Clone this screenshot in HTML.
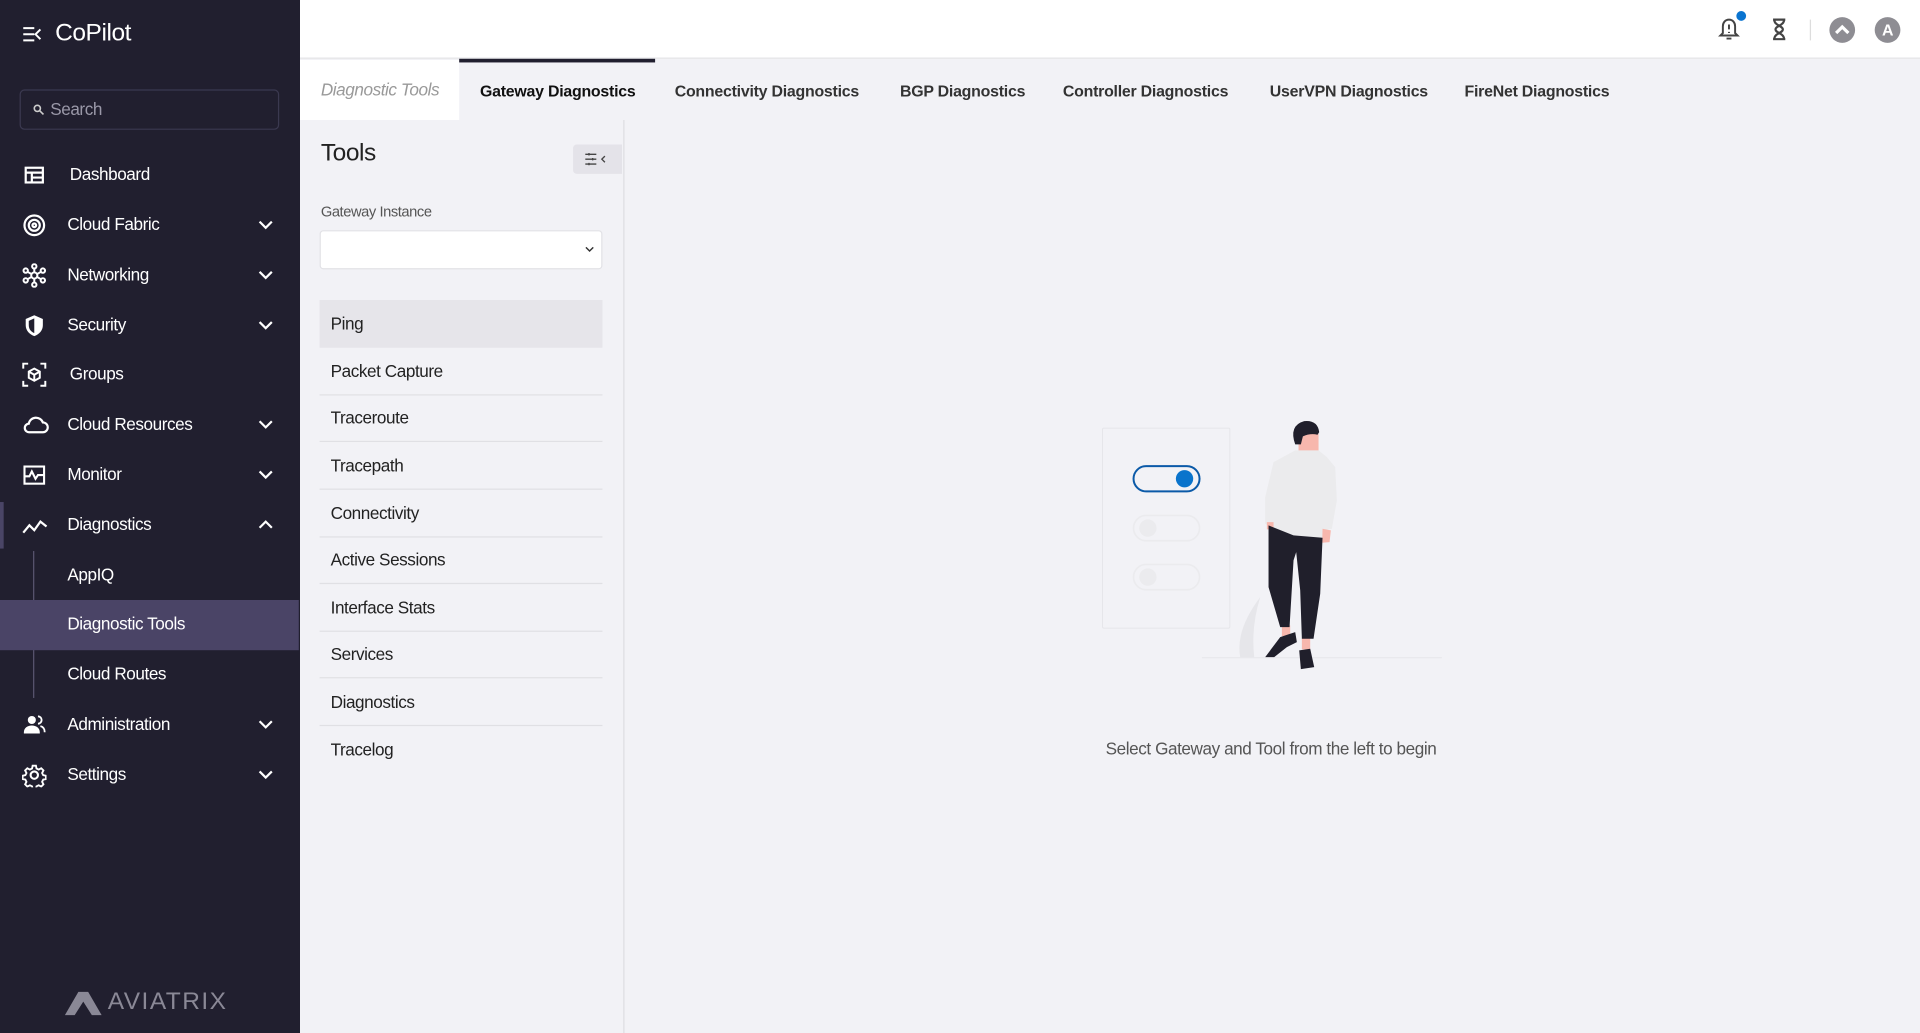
<!DOCTYPE html>
<html><head><meta charset="utf-8"><style>
*{box-sizing:border-box;margin:0;padding:0}
html,body{width:1920px;height:1033px;overflow:hidden;background:#f2f2f6;font-family:"Liberation Sans",sans-serif}
#w{position:absolute;left:0;top:0;width:1568px;height:844px;transform:scale(1.22449);transform-origin:0 0;background:#f2f2f6;letter-spacing:-0.35px}
.a{position:absolute}
#sb{left:0;top:0;width:245px;height:844px;background:#211f2f;color:#fff}
.ni{position:absolute;left:0;width:245px;height:40px;font-size:14px;color:#fff}
.ni span{position:absolute;left:55px;top:11px}
.ni svg.ic{position:absolute;left:18px;top:10px}
.ni svg.ch{position:absolute;left:211px;top:15px}
.tab{position:absolute;top:49px;height:49px;font-size:13px;font-weight:bold;color:#333;padding-top:18px;letter-spacing:-0.2px}
.li{position:absolute;left:261px;width:231px;height:38.6px;border-bottom:1px solid #e0e0e4;font-size:14px;color:#222;padding:11px 0 0 9px}
</style></head><body><div id="w">
<div id="sb" class="a">
 <svg class="a" style="left:18px;top:21px" width="17" height="14" viewBox="0 0 17 14" fill="none" stroke="#fff" stroke-width="1.6"><path d="M1 2h9M1 7h9M1 12h9M15 3l-4 4 4 4"/></svg>
 <div class="a" style="left:45px;top:16px;font-size:20px">CoPilot</div>
 <div class="a" style="left:16px;top:73px;width:212px;height:33px;border:1px solid #3b3950;border-radius:4px"></div>
 <svg class="a" style="left:27px;top:85px" width="9" height="9" viewBox="0 0 9 9" fill="none" stroke="#ccc" stroke-width="1.3"><circle cx="3.5" cy="3.5" r="2.5"/><path d="M5.5 5.5L8.5 8.5"/></svg>
 <div class="a" style="left:41px;top:81px;font-size:14px;color:#9a98a8">Search</div>

 <div class="ni" style="top:123px"><svg class="ic" width="20" height="20" viewBox="0 0 20 20" fill="none" stroke="#fff" stroke-width="1.8"><rect x="3" y="4" width="14" height="12"/><path d="M3 8h14M8 8v8M8 12h9"/></svg><span style="left:57px">Dashboard</span></div>
 <div class="ni" style="top:164px"><svg class="ic" width="20" height="20" viewBox="0 0 20 20" fill="none" stroke="#fff" stroke-width="1.8"><circle cx="10" cy="10" r="8"/><circle cx="10" cy="10" r="4.5"/><circle cx="10" cy="10" r="1.5"/></svg><span>Cloud Fabric</span><svg class="ch" width="12" height="10" viewBox="0 0 12 10" fill="none" stroke="#fff" stroke-width="1.8"><path d="M1 2l5 5 5-5"/></svg></div>
 <div class="ni" style="top:205px"><svg class="ic" width="20" height="20" viewBox="0 0 20 20" fill="none" stroke="#fff" stroke-width="1.6"><circle cx="10" cy="10" r="2.5"/><circle cx="10" cy="2.5" r="1.8"/><circle cx="10" cy="17.5" r="1.8"/><circle cx="3" cy="6" r="1.8"/><circle cx="17" cy="6" r="1.8"/><circle cx="3" cy="14" r="1.8"/><circle cx="17" cy="14" r="1.8"/><path d="M10 4v3.5M10 12.5V16M4.5 7l3.5 2M15.5 7l-3.5 2M4.5 13l3.5-2M15.5 13l-3.5-2"/></svg><span>Networking</span><svg class="ch" width="12" height="10" viewBox="0 0 12 10" fill="none" stroke="#fff" stroke-width="1.8"><path d="M1 2l5 5 5-5"/></svg></div>
 <div class="ni" style="top:246px"><svg class="ic" width="20" height="20" viewBox="0 0 20 20"><path d="M10 1.5l7 3v5c0 4.5-3 7.5-7 9-4-1.5-7-4.5-7-9v-5z" fill="#fff"/><path d="M10 4v12c-2.5-1-4.5-3-4.5-6.5V6z" fill="#211f2f"/></svg><span>Security</span><svg class="ch" width="12" height="10" viewBox="0 0 12 10" fill="none" stroke="#fff" stroke-width="1.8"><path d="M1 2l5 5 5-5"/></svg></div>
 <div class="ni" style="top:286px"><svg class="ic" width="20" height="20" viewBox="0 0 20 20" fill="none" stroke="#fff" stroke-width="1.6"><path d="M1 5V1h4M15 1h4v4M19 15v4h-4M5 19H1v-4"/><path d="M10 5l4.5 2.5v5L10 15l-4.5-2.5v-5z M5.5 7.5L10 10l4.5-2.5M10 10v5"/></svg><span style="left:57px">Groups</span></div>
 <div class="ni" style="top:327px"><svg class="ic" width="22" height="20" viewBox="0 0 22 20" fill="none" stroke="#fff" stroke-width="1.8"><path d="M6 16h11a4 4 0 0 0 0-8 6 6 0 0 0-11.5 1A3.5 3.5 0 0 0 6 16z"/></svg><span>Cloud Resources</span><svg class="ch" width="12" height="10" viewBox="0 0 12 10" fill="none" stroke="#fff" stroke-width="1.8"><path d="M1 2l5 5 5-5"/></svg></div>
 <div class="ni" style="top:368px"><svg class="ic" width="20" height="20" viewBox="0 0 20 20" fill="none" stroke="#fff" stroke-width="1.7"><rect x="2" y="3" width="16" height="14"/><path d="M2 11h4l2-4 3 6 2-3h5"/></svg><span>Monitor</span><svg class="ch" width="12" height="10" viewBox="0 0 12 10" fill="none" stroke="#fff" stroke-width="1.8"><path d="M1 2l5 5 5-5"/></svg></div>
 <div class="a" style="left:0;top:410px;width:3px;height:38px;background:#4a4566"></div>
 <div class="ni" style="top:409px"><svg class="ic" width="22" height="20" viewBox="0 0 22 20" fill="none" stroke="#fff" stroke-width="1.8"><path d="M1 16l5-6 4 4 5-7 5 4"/></svg><span>Diagnostics</span><svg class="ch" width="12" height="10" viewBox="0 0 12 10" fill="none" stroke="#fff" stroke-width="1.8"><path d="M1 7l5-5 5 5"/></svg></div>
 <div class="a" style="left:27px;top:450px;width:1px;height:120px;background:#5a5670"></div>
 <div class="ni" style="top:450px"><span>AppIQ</span></div>
 <div class="a" style="left:0;top:490px;width:244px;height:41px;background:#4a4466"></div>
 <div class="ni" style="top:490px"><span>Diagnostic Tools</span></div>
 <div class="ni" style="top:531px"><span>Cloud Routes</span></div>
 <div class="ni" style="top:572px"><svg class="ic" width="20" height="20" viewBox="0 0 20 20" fill="#fff"><circle cx="8" cy="6" r="3.3"/><path d="M1.5 16c0-3.5 3-5.5 6.5-5.5s6.5 2 6.5 5.5v1h-13z"/><path d="M13 3a3 3 0 0 1 0 6M15 11c2 .5 3.5 2 3.5 5" fill="none" stroke="#fff" stroke-width="1.5"/></svg><span>Administration</span><svg class="ch" width="12" height="10" viewBox="0 0 12 10" fill="none" stroke="#fff" stroke-width="1.8"><path d="M1 2l5 5 5-5"/></svg></div>
 <div class="ni" style="top:613px"><svg class="ic" width="20" height="20" viewBox="0 0 20 20" fill="none" stroke="#fff" stroke-width="1.7"><circle cx="10" cy="10" r="3"/><path d="M8.5 1.5h3l.5 2.5 2 1 2.3-1.2 2 2-1.2 2.3 1 2 2.5.5v3l-2.5.5-1 2 1.2 2.3-2 2-2.3-1.2-2 1-.5 2.5h-3l-.5-2.5-2-1-2.3 1.2-2-2 1.2-2.3-1-2-2.5-.5v-3l2.5-.5 1-2-1.2-2.3 2-2 2.3 1.2 2-1z" transform="translate(10 10) scale(.9) translate(-10 -10)"/></svg><span>Settings</span><svg class="ch" width="12" height="10" viewBox="0 0 12 10" fill="none" stroke="#fff" stroke-width="1.8"><path d="M1 2l5 5 5-5"/></svg></div>
 <svg class="a" style="left:53px;top:808px" width="30" height="22" viewBox="0 0 30 22"><path d="M0 21L11 2h8l11 19h-8l-7-11-7 11z" fill="#8a8896"/></svg>
 <div class="a" style="left:88px;top:807px;font-size:20px;color:#8a8896;letter-spacing:1.2px">AVIATRIX</div>
</div>

<div class="a" style="left:245px;top:0;width:1323px;height:48px;background:#fff;border-bottom:1px solid #e3e3e6"></div>
<svg class="a" style="left:1403px;top:14px" width="18" height="20" viewBox="0 0 18 20" fill="none" stroke="#444" stroke-width="1.6"><path d="M9 2c-3 0-5 2.5-5 5.5V13l-2 2h14l-2-2V7.5C14 4.5 12 2 9 2zM7 17.5h4"/><path d="M9 6v4M9 12v1"/></svg>
<div class="a" style="left:1418px;top:9px;width:8px;height:8px;border-radius:50%;background:#0a74d0"></div>
<svg class="a" style="left:1447px;top:15px" width="12" height="18" viewBox="0 0 12 18" fill="none" stroke="#444" stroke-width="1.8"><path d="M1 1h10M1 17h10M2 1c0 5 7 5 7 8s-7 3-7 8M10 1c0 5-7 5-7 8s7 3 7 8"/></svg>
<div class="a" style="left:1478px;top:16px;width:1px;height:17px;background:#ddd"></div>
<div class="a" style="left:1494px;top:14px;width:21px;height:21px;border-radius:50%;background:#8e8d93"></div>
<svg class="a" style="left:1498px;top:19px" width="13" height="10" viewBox="0 0 13 10"><path d="M1.5 8L6.5 3l5 5" fill="none" stroke="#fff" stroke-width="2.6"/></svg>
<div class="a" style="left:1531px;top:14px;width:21px;height:21px;border-radius:50%;background:#8e8d93;color:#fff;font-size:13px;font-weight:bold;text-align:center;line-height:21px">A</div>

<div class="a" style="left:245px;top:49px;width:130px;height:49px;background:#fff"></div>
<div class="a" style="left:262px;top:65px;font-size:14px;font-style:italic;color:#999">Diagnostic Tools</div>
<div class="a" style="left:375px;top:48px;width:160px;height:3px;background:#211f2f"></div>
<div class="tab" style="left:392px;color:#111">Gateway Diagnostics</div>
<div class="tab" style="left:551px">Connectivity Diagnostics</div>
<div class="tab" style="left:735px">BGP Diagnostics</div>
<div class="tab" style="left:868px">Controller Diagnostics</div>
<div class="tab" style="left:1037px">UserVPN Diagnostics</div>
<div class="tab" style="left:1196px">FireNet Diagnostics</div>

<div class="a" style="left:509px;top:98px;width:1px;height:746px;background:#dedee2"></div>
<div class="a" style="left:262px;top:114px;font-size:20px;color:#222">Tools</div>
<div class="a" style="left:468px;top:118px;width:40px;height:24px;background:#e4e3e9;border-radius:3px 0 0 3px"></div>
<svg class="a" style="left:477px;top:124px" width="22" height="12" viewBox="0 0 22 12" fill="none" stroke="#444" stroke-width="1.1"><path d="M1 2h9M1 6h9M1 10h9M4 1v2M7 5v2M4 9v2M17 3.5l-2.5 2.5 2.5 2.5"/></svg>
<div class="a" style="left:262px;top:166px;font-size:12px;color:#555">Gateway Instance</div>
<div class="a" style="left:261px;top:188px;width:231px;height:32px;background:#fff;border:1px solid #e2e2e6;border-radius:3px"></div>
<svg class="a" style="left:478px;top:201px" width="7" height="5" viewBox="0 0 7 5"><path d="M.5 1l3 3 3-3" fill="none" stroke="#333" stroke-width="1.2"/></svg>
<div class="li" style="top:245px;background:#e6e5ea;border-bottom:none">Ping</div>
<div class="li" style="top:284px">Packet Capture</div>
<div class="li" style="top:322px">Traceroute</div>
<div class="li" style="top:361px">Tracepath</div>
<div class="li" style="top:400px">Connectivity</div>
<div class="li" style="top:438px">Active Sessions</div>
<div class="li" style="top:477px">Interface Stats</div>
<div class="li" style="top:515px">Services</div>
<div class="li" style="top:554px">Diagnostics</div>
<div class="li" style="top:593px;border-bottom:none">Tracelog</div>

<svg class="a" style="left:882px;top:327px" width="327" height="245" viewBox="0 0 1200 900">
 <rect x="67" y="83" width="382" height="600" rx="4" fill="none" stroke="#e6e6ea" stroke-width="3"/>
 <rect x="160" y="197" width="198" height="76" rx="38" fill="none" stroke="#0b5aa8" stroke-width="6"/>
 <circle cx="313" cy="235" r="26" fill="#0a74cc"/>
 <rect x="160" y="345" width="198" height="76" rx="38" fill="none" stroke="#ebebee" stroke-width="5"/>
 <circle cx="203" cy="383" r="26" fill="#ebebee"/>
 <rect x="160" y="492" width="198" height="76" rx="38" fill="none" stroke="#ebebee" stroke-width="5"/>
 <circle cx="203" cy="530" r="26" fill="#ebebee"/>
 <path d="M365 772H1085" stroke="#e6e6ea" stroke-width="3"/>
 <path d="M480 770Q465 690 540 590Q512 680 522 770Z" fill="#e6e6ea"/>
 <path d="M655 100h60v55h-60z" fill="#f7b7ad"/>
 <path d="M645 132Q625 75 672 62Q712 58 717 95L712 103Q690 98 668 108L662 132Z" fill="#201f2b"/>
 <path d="M645 150L715 150L740 170L765 200L770 300L755 385L730 390L725 412L640 405L575 385L555 370L555 290L580 185Z" fill="#ebebed"/>
 <path d="M560 365h20v22h-20zM727 385l25 5-4 35-22 2z" fill="#f7b7ad"/>
 <path d="M605 675h25v32h-25zM665 712h25v35h-25z" fill="#f7b7ad"/>
 <path d="M565 375L640 405L727 412L720 580L700 715L665 715L660 570L648 455L640 480L628 680L600 680L565 560Z" fill="#201f2b"/>
 <path d="M555 770L600 710L645 695L650 725L620 740L582 770Z" fill="#201f2b"/>
 <path d="M657 750L690 745L702 800L662 806Z" fill="#201f2b"/>
</svg>
<div class="a" style="left:838px;top:603px;width:400px;text-align:center;font-size:14px;color:#555">Select Gateway and Tool from the left to begin</div>
</div></body></html>
